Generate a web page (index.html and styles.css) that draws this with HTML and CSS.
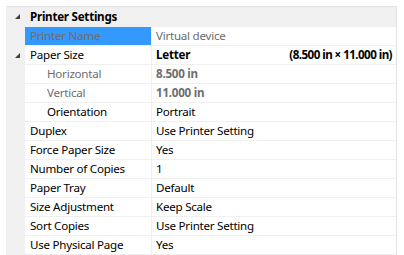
FILE: index.html
```html
<!DOCTYPE html>
<html>
  <head>
    <meta charset="utf-8">
    <title>Printer Settings</title>
    <link rel="stylesheet" href="styles.css">
  </head>
  <body>
    <div class="props">
      <div class="cat">
        <span class="gut"><span class="tri"></span></span>
        <span class="cat-name">Printer Settings</span>
      </div>

      <div class="row">
        <span class="gut"></span>
        <span class="name sel dim">Printer Name</span>
        <span class="val dim">Virtual device</span>
      </div>
      <div class="row">
        <span class="gut"><span class="tri"></span></span>
        <span class="name">Paper Size</span>
        <span class="val bold split"><span>Letter</span><span class="dims">(8.500 in × 11.000 in)</span></span>
      </div>
      <div class="row">
        <span class="gut"></span>
        <span class="name sub dim">Horizontal</span>
        <span class="val bold dim">8.500 in</span>
      </div>
      <div class="row">
        <span class="gut"></span>
        <span class="name sub dim">Vertical</span>
        <span class="val bold dim">11.000 in</span>
      </div>
      <div class="row">
        <span class="gut"></span>
        <span class="name sub">Orientation</span>
        <span class="val">Portrait</span>
      </div>
      <div class="row">
        <span class="gut"></span>
        <span class="name">Duplex</span>
        <span class="val">Use Printer Setting</span>
      </div>
      <div class="row">
        <span class="gut"></span>
        <span class="name">Force Paper Size</span>
        <span class="val">Yes</span>
      </div>
      <div class="row">
        <span class="gut"></span>
        <span class="name">Number of Copies</span>
        <span class="val">1</span>
      </div>
      <div class="row">
        <span class="gut"></span>
        <span class="name">Paper Tray</span>
        <span class="val">Default</span>
      </div>
      <div class="row">
        <span class="gut"></span>
        <span class="name">Size Adjustment</span>
        <span class="val">Keep Scale</span>
      </div>
      <div class="row">
        <span class="gut"></span>
        <span class="name">Sort Copies</span>
        <span class="val">Use Printer Setting</span>
      </div>
      <div class="row">
        <span class="gut"></span>
        <span class="name">Use Physical Page</span>
        <span class="val">Yes</span>
      </div>
    </div>
  </body>
</html>
```

FILE: styles.css
```css
body {
  margin: 0;
  background-color: white;
  font-family: "Segoe UI", "Noto Sans", sans-serif;
  font-size: 11.6px;
  letter-spacing: -0.25px;
  color: black;
}

.props {
  margin: 6px 0 0 6px;
  width: 390px;
  border-top: 1px solid #e3e3e3;
  border-right: 1px solid #e3e3e3;
}

.cat {
  display: flex;
  height: 20px;
  line-height: 20px;
  background-color: #f0f0f0;
}

.cat-name {
  padding-left: 5px;
  font-weight: bold;
}

.row {
  display: flex;
  height: 19px;
  line-height: 18px;
}

.gut {
  position: relative;
  flex: none;
  width: 19px;
  background-color: #f0f0f0;
}

/* expanded glyph */
.tri {
  position: absolute;
  left: 9px;
  top: 7px;
  width: 0;
  height: 0;
  border-left: 5px solid transparent;
  border-bottom: 5px solid #404040;
}

.name {
  flex: none;
  width: 121px;
  padding-left: 5px;
  border-right: 1px solid #f0f0f0;
  border-bottom: 1px solid #f0f0f0;
  white-space: nowrap;
}

.name.sub {
  width: 104px;
  padding-left: 22px;
}

.sel {
  background-color: #3399ff;
}

.val {
  flex: 1;
  padding: 0 4px;
  border-bottom: 1px solid #f0f0f0;
  white-space: nowrap;
}

.split {
  display: flex;
  justify-content: space-between;
}

.dims {
  letter-spacing: -0.55px;
}

.bold {
  font-weight: bold;
}

.dim {
  color: #6d6d6d;
}
```
